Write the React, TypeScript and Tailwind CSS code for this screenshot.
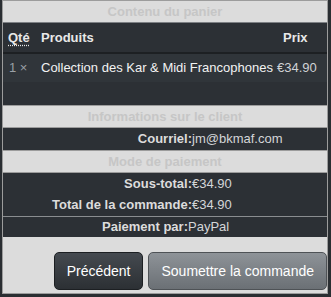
import React from "react";

const font = { fontFamily: '"Liberation Sans", Arial, sans-serif' };

function LightHeader({ children }: { children: React.ReactNode }) {
  return (
    <div className="h-[21px] flex items-center justify-center bg-[#dcdcdc] text-[13px] font-bold text-[#c6c6c6] leading-none">
      {children}
    </div>
  );
}

export default function App() {
  return (
    <div className="w-[331px] h-[297px] bg-[#2a2e32] pl-[2px]" style={font}>
      <div className="w-[326px] h-[294px] border border-[#9c9c9c] bg-[#dcdcdc] flex flex-col">
        <div className="h-[22px] flex items-center justify-center text-[13px] font-bold text-[#c6c6c6] border-b border-[#7d8084]">
          Contenu du panier
        </div>
        {/* cart table */}
        <div className="bg-[#2c3035]">
          <div className="h-[29px] flex items-center text-[13px] font-bold text-[#e8e8e8]">
            <div className="w-[38px] pl-[5px]">
              <span className="underline decoration-dotted underline-offset-[3px]">Qté</span>
            </div>
            <div className="w-[236px]">Produits</div>
            <div className="pl-[6px]">Prix</div>
          </div>
          <div className="h-[2px] bg-[#1d2023]" />
          <div className="h-[28px] flex items-center text-[13px] bg-[#30353a]">
            <div className="w-[38px] pl-[6px] text-[#9aa0a6]">1 ×</div>
            <div className="w-[236px] text-[#f2f2f2]">Collection des Kar &amp; Midi Francophones</div>
            <div className="text-[#cfd2d5]">€34.90</div>
          </div>
          <div className="h-[23px]" />
        </div>
        <div className="border-t border-[#9c9c9c]" />
        <LightHeader>Informations sur le client</LightHeader>
        <div className="border-t border-[#9c9c9c]" />
        <div className="h-[22px] bg-[#2c3035] flex items-center text-[13px]">
          <div className="w-[189px] text-right font-bold text-[#dcdcdc]">Courriel:</div>
          <div className="text-[#d4d6d8]">jm@bkmaf.com</div>
        </div>
        <div className="border-t border-[#9c9c9c]" />
        <LightHeader>Mode de paiement</LightHeader>
        <div className="border-t border-[#9c9c9c]" />
        <div className="bg-[#2c3035] text-[13px]">
          <div className="h-[21px] flex items-center">
            <div className="w-[189px] text-right font-bold text-[#dcdcdc]">Sous-total:</div>
            <div className="text-[#d4d6d8]">€34.90</div>
          </div>
          <div className="h-[22px] flex items-center">
            <div className="w-[189px] text-right font-bold text-[#dcdcdc]">Total de la commande:</div>
            <div className="text-[#d4d6d8]">€34.90</div>
          </div>
          <div className="border-t border-[#8a8d90]" />
          <div className="h-[20px] flex items-center">
            <div className="w-[185px] text-right font-bold text-[#dcdcdc]">Paiement par:</div>
            <div className="text-[#d4d6d8]">PayPal</div>
          </div>
        </div>
        <div className="flex justify-end gap-[5px] mt-[15px]">
          <button className="h-[38px] px-[12px] rounded-[5px] border border-[#1c1f22] bg-gradient-to-b from-[#454a50] to-[#2c3034] text-[14px] text-white leading-none">
            Précédent
          </button>
          <button className="h-[38px] px-[12px] rounded-[5px] border border-[#4e5256] bg-gradient-to-b from-[#8e9398] to-[#6b7075] text-[14px] text-white leading-none">
            Soumettre la commande
          </button>
        </div>
      </div>
    </div>
  );
}
